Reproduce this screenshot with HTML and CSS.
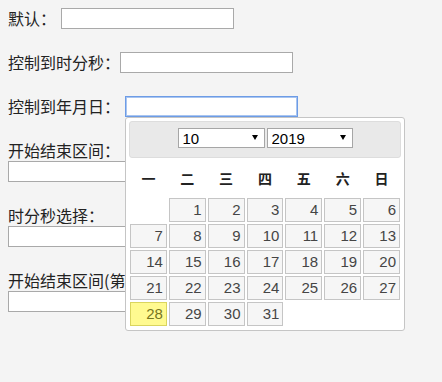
FILE: index.html
```html
<!DOCTYPE html>
<html lang="zh-CN">
<head>
  <meta charset="UTF-8">
  <title>日期选择</title>
  <link rel="stylesheet" href="styles.css">
</head>
<body>

  <div class="fila">
    <label class="espacio">默认：</label><input type="text" class="fecha">
  </div>

  <div class="fila">
    <label>控制到时分秒：</label><input type="text" class="fecha">
  </div>

  <div class="fila">
    <label class="espacio">控制到年月日：</label><input type="text" class="fecha activo">
  </div>

  <div class="bloque">
    <label>开始结束区间：</label>
    <input type="text" class="fecha">
  </div>

  <div class="bloque">
    <label>时分秒选择：</label>
    <input type="text" class="fecha">
  </div>

  <div class="bloque">
    <label>开始结束区间(第二个不能小于第一个)：</label>
    <input type="text" class="fecha">
  </div>

  <!-- calendario abierto del tercer campo -->
  <div class="calendario">
    <div class="cal-cabecera">
      <span class="sel">
        <select class="cal-mes">
          <option>10</option>
        </select>
      </span>
      <span class="sel">
        <select class="cal-anio">
          <option>2019</option>
        </select>
      </span>
    </div>
    <table class="cal-tabla">
      <thead>
        <tr><th>一</th><th>二</th><th>三</th><th>四</th><th>五</th><th>六</th><th>日</th></tr>
      </thead>
      <tbody>
        <tr><td></td><td><span>1</span></td><td><span>2</span></td><td><span>3</span></td><td><span>4</span></td><td><span>5</span></td><td><span>6</span></td></tr>
        <tr><td><span>7</span></td><td><span>8</span></td><td><span>9</span></td><td><span>10</span></td><td><span>11</span></td><td><span>12</span></td><td><span>13</span></td></tr>
        <tr><td><span>14</span></td><td><span>15</span></td><td><span>16</span></td><td><span>17</span></td><td><span>18</span></td><td><span>19</span></td><td><span>20</span></td></tr>
        <tr><td><span>21</span></td><td><span>22</span></td><td><span>23</span></td><td><span>24</span></td><td><span>25</span></td><td><span>26</span></td><td><span>27</span></td></tr>
        <tr><td><span class="hoy">28</span></td><td><span>29</span></td><td><span>30</span></td><td><span>31</span></td><td></td><td></td><td></td></tr>
      </tbody>
    </table>
  </div>

</body>
</html>
```

FILE: styles.css
```css
body {
  margin: 8px;
  background-color: #f4f4f4;
  font-family: "Noto Sans CJK JP", "Noto Sans CJK SC", sans-serif;
  font-size: 16px;
  color: #222;
}

.fila {
  display: flex;
  align-items: center;
  margin-bottom: 23px;
}

.fila label {
  line-height: 21px;
}

.fila .espacio {
  margin-right: 5px;
}

.bloque {
  margin-bottom: 23px;
}

.bloque label {
  display: block;
  line-height: 21px;
  white-space: nowrap;
}

.fecha {
  display: block;
  width: 173px;
  height: 21px;
  box-sizing: border-box;
  margin: 0;
  padding: 1px 2px;
  border: 1px solid #a9a9a9;
  background: white;
  font-size: 13px;
}

.fecha.activo {
  border-color: #6d9ce6;
  box-shadow: inset 0 0 0 1px #a9c5f0;
  outline: none;
}

.calendario {
  position: absolute;
  left: 125px;
  top: 117px;
  width: 280px;
  box-sizing: border-box;
  padding: 3px;
  background: white;
  border: 1px solid #c5c5c5;
  border-radius: 3px;
}

.cal-cabecera {
  display: flex;
  justify-content: center;
  align-items: flex-start;
  gap: 2px;
  height: 37px;
  box-sizing: border-box;
  padding-top: 6px;
  background: #e9e9e9;
  border: 1px solid #dddddd;
  border-radius: 3px;
}

.sel {
  position: relative;
  display: block;
}

.sel select {
  -webkit-appearance: none;
  appearance: none;
  display: block;
  width: 87px;
  height: 20px;
  box-sizing: border-box;
  margin: 0;
  padding: 0 0 0 4px;
  border: 1px solid #a6a6a6;
  border-radius: 0;
  background: white;
  font: 15px "Liberation Sans", Arial, sans-serif;
  color: #000;
}

.sel .cal-anio {
  width: 86px;
}

.sel::after {
  content: "";
  position: absolute;
  right: 7px;
  top: 7px;
  border-left: 3px solid transparent;
  border-right: 3px solid transparent;
  border-top: 5px solid #000;
  pointer-events: none;
}

.cal-tabla {
  width: 100%;
  border-collapse: collapse;
  table-layout: fixed;
}

.cal-tabla th {
  height: 39px;
  padding: 0;
  font: bold 14px "Noto Sans CJK SC", sans-serif;
  color: #222;
  text-align: center;
}

.cal-tabla td {
  padding: 1px;
}

.cal-tabla td span {
  display: block;
  height: 24px;
  box-sizing: border-box;
  padding: 0 3px;
  border: 1px solid #c5c5c5;
  background: #f6f6f6;
  color: #454545;
  text-align: right;
  font: 15px/22px "Liberation Sans", Arial, sans-serif;
}

.cal-tabla td span.hoy {
  background: #fffa90;
  border-color: #dad55e;
  color: #777620;
}
```
